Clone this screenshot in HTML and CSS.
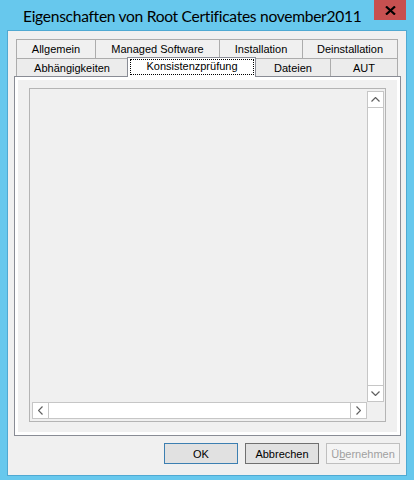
FILE: index.html
```html
<!DOCTYPE html>
<html lang="de">
<head>
  <meta charset="UTF-8">
  <meta name="viewport" content="width=device-width, initial-scale=1.0">
  <title>Eigenschaften von Root Certificates november2011</title>
  <link rel="stylesheet" href="styles.css">
</head>
<body>
  <div class="window">
    <div class="titlebar">
      <div class="title">Eigenschaften von Root Certificates november2011</div>
      <div class="close">
        <svg width="11" height="9" viewBox="0 0 11 9">
          <path d="M1 0.5 L10 8.5 M10 0.5 L1 8.5" stroke="#000" stroke-width="2.2"/>
        </svg>
      </div>
    </div>

    <div class="client">
      <!-- Tabs -->
      <div class="tabs">
        <div class="tab-row">
          <div class="tab" style="width:79px">Allgemein</div>
          <div class="tab" style="width:124px">Managed Software</div>
          <div class="tab" style="width:83px">Installation</div>
          <div class="tab last" style="width:96px">Deinstallation</div>
        </div>
        <div class="tab-row">
          <div class="tab" style="width:111px">Abhängigkeiten</div>
          <div class="tab selected" style="width:129px"><span class="focus">Konsistenzprüfung</span></div>
          <div class="tab" style="width:74px">Dateien</div>
          <div class="tab last" style="width:68px">AUT</div>
        </div>
      </div>

      <!-- Tab page -->
      <div class="panel">
        <div class="page">
          <div class="listbox">
            <div class="view"></div>
            <div class="vscroll">
              <div class="sbtn bottom-line">
                <svg width="9" height="5" viewBox="0 0 9 5"><polyline points="0.5,4.5 4.5,0.5 8.5,4.5" fill="none" stroke="#606060" stroke-width="1.2"/></svg>
              </div>
              <div class="track"></div>
              <div class="sbtn top-line">
                <svg width="9" height="5" viewBox="0 0 9 5"><polyline points="0.5,0.5 4.5,4.5 8.5,0.5" fill="none" stroke="#606060" stroke-width="1.2"/></svg>
              </div>
            </div>
            <div class="hscroll">
              <div class="sbtn right-line">
                <svg width="5" height="9" viewBox="0 0 5 9"><polyline points="4.5,0.5 0.5,4.5 4.5,8.5" fill="none" stroke="#606060" stroke-width="1.2"/></svg>
              </div>
              <div class="track"></div>
              <div class="sbtn left-line">
                <svg width="5" height="9" viewBox="0 0 5 9"><polyline points="0.5,0.5 4.5,4.5 0.5,8.5" fill="none" stroke="#606060" stroke-width="1.2"/></svg>
              </div>
            </div>
            <div class="corner"></div>
          </div>
        </div>
      </div>

      <!-- Dialog buttons -->
      <div class="buttons">
        <button class="btn default">OK</button>
        <button class="btn">Abbrechen</button>
        <button class="btn disabled" disabled>Ü<u>b</u>ernehmen</button>
      </div>
    </div>
  </div>
</body>
</html>
```

FILE: styles.css
```css
body {
  margin: 0;
  padding: 0;
  background: #65c7ec;
  font-family: "Liberation Sans", Arial, sans-serif;
}
.window {
  width: 414px;
  height: 480px;
  box-sizing: border-box;
  padding: 0 8px 5px 8px;
  background: #67c8ed;
}
.titlebar {
  height: 31px;
  display: flex;
  justify-content: space-between;
  align-items: flex-start;
}
.title {
  padding: 6px 0 0 15px;
  font-family: Lato, "Noto Sans", sans-serif;
  font-size: 15.6px;
  letter-spacing: -0.3px;
  line-height: 20px;
  color: #000;
  white-space: nowrap;
}
.close {
  width: 32px;
  height: 20px;
  background: #c75050;
  display: flex;
  align-items: center;
  justify-content: center;
}
.client {
  height: 444px;
  box-sizing: border-box;
  background: #f0f0f0;
  padding: 8px 5px 0 6px;
  box-shadow: 0 0 0 1px #4fa9d2;
}
.tabs {
  margin-left: 2px;
  font-size: 11px;
  color: #000;
}
.tab-row {
  display: flex;
}
.tab {
  box-sizing: border-box;
  height: 19px;
  border-top: 1px solid #acacac;
  border-left: 1px solid #acacac;
  background: #f0f0f0;
  display: flex;
  align-items: center;
  justify-content: center;
  white-space: nowrap;
}
.tab.last {
  border-right: 1px solid #acacac;
}
.tab-row + .tab-row .tab {
  height: 18px;
  background: #ececec;
}
.tab-row + .tab-row .tab.selected {
  height: 20px;
  margin-top: -1px;
  margin-bottom: -1px;
  background: #fff;
  border: 1px solid #898c95;
  border-bottom: none;
  position: relative;
  z-index: 1;
  align-items: stretch;
  padding: 1px 1px 2px 2px;
}
.tab-row + .tab-row .tab.selected + .tab {
  border-left: none;
}
.focus {
  flex: 1;
  border: 1px dotted #000;
  display: flex;
  align-items: center;
  justify-content: center;
  padding-bottom: 2px;
}
.panel {
  height: 360px;
  width: 387px;
  box-sizing: border-box;
  border: 1px solid #898c95;
  background: #fff;
  padding: 3px;
}
.page {
  height: 100%;
  background: #f0f0f0;
  padding: 8px 0 0 11px;
  box-sizing: border-box;
}
.listbox {
  width: 357px;
  height: 334px;
  box-sizing: border-box;
  border: 1px solid #b4b4b4;
  padding: 2px 1px 2px 2px;
  display: grid;
  grid-template-columns: 1fr 17px;
  grid-template-rows: 1fr 17px;
}
.vscroll {
  display: flex;
  flex-direction: column;
  border: 1px solid #c6c6c6;
  background: #fff;
}
.hscroll {
  display: flex;
  border: 1px solid #c6c6c6;
  background: #fff;
}
.vscroll .sbtn {
  height: 15px;
}
.hscroll .sbtn {
  width: 15px;
}
.sbtn {
  display: flex;
  align-items: center;
  justify-content: center;
  flex-shrink: 0;
}
.bottom-line {
  border-bottom: 1px solid #c6c6c6;
}
.top-line {
  border-top: 1px solid #c6c6c6;
}
.right-line {
  border-right: 1px solid #c6c6c6;
}
.left-line {
  border-left: 1px solid #c6c6c6;
}
.track {
  flex: 1;
}
.corner {
  background: #f0f0f0;
}
.buttons {
  display: flex;
  justify-content: flex-end;
  gap: 7px;
  margin-top: 7px;
  padding-right: 1px;
  width: 387px;
  box-sizing: border-box;
}
.btn {
  width: 74px;
  height: 21px;
  box-sizing: border-box;
  border: 1px solid #adadad;
  background: #e1e1e1;
  font-family: "Liberation Sans", Arial, sans-serif;
  font-size: 11px;
  color: #000;
  padding: 0;
}
.btn.default {
  border-color: #3c7fb1;
}
.btn:nth-child(2) {
  border-color: #707070;
}
.btn.disabled {
  border-color: #bfbfbf;
  background: #f4f4f4;
  color: #a0a0a0;
}
```
